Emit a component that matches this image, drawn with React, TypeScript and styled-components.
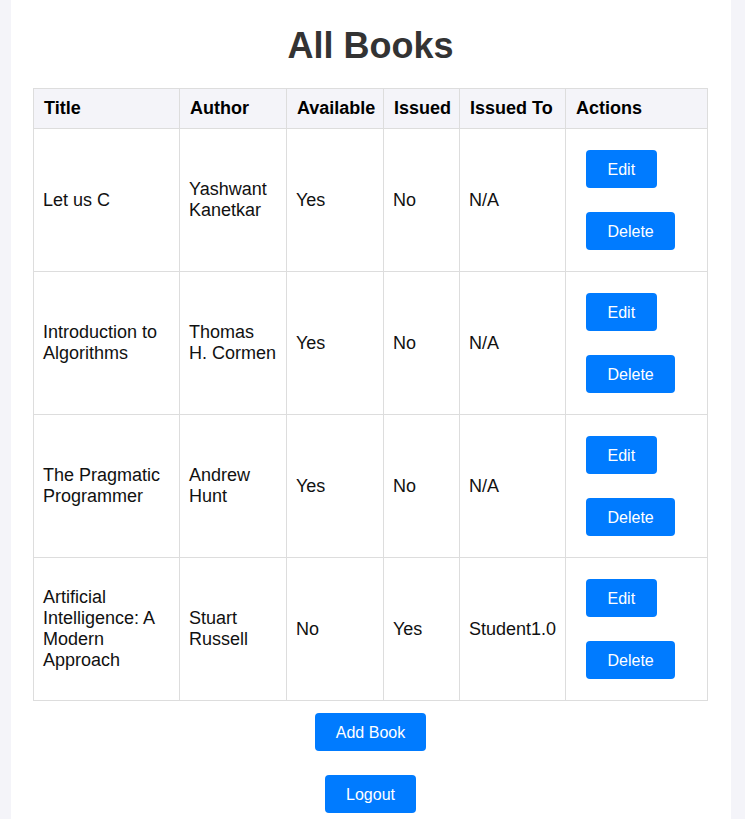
import React from "react";
import styled, { createGlobalStyle } from "styled-components";

const GlobalStyle = createGlobalStyle`
  html, body {
    margin: 0;
    padding: 0;
    background: #f4f4f9;
    font-family: "Liberation Sans", Arial, sans-serif;
  }
`;

const Container = styled.div`
  width: 720px;
  margin-left: 11px;
  box-sizing: border-box;
  background: #ffffff;
  padding: 25px 23px 6px 22px;
  min-height: 819px;
`;

const Title = styled.h1`
  margin: 0 0 22px;
  text-align: center;
  font-size: 36px;
  line-height: 41px;
  font-weight: bold;
  color: #333333;
`;

const Table = styled.table`
  width: 674px;
  border-collapse: collapse;
  table-layout: fixed;
  font-size: 18px;
  color: #111111;
`;

const HeadCell = styled.th`
  border: 1px solid #dddddd;
  background: #f4f4f9;
  padding: 9px 10px;
  text-align: left;
  font-weight: bold;
  line-height: 21px;
  color: #000000;
`;

const Cell = styled.td`
  border: 1px solid #dddddd;
  padding: 10px 9px 10px 9px;
  line-height: 21px;
  vertical-align: middle;
`;

const ActionCell = styled.td`
  border: 1px solid #dddddd;
  padding: 21px 20px 21px 20px;
  vertical-align: middle;
`;

const ActionStack = styled.div`
  display: flex;
  flex-direction: column;
  align-items: flex-start;
  gap: 24px;
`;

const Button = styled.button<{ $wide?: boolean }>`
  display: inline-block;
  background: #007bff;
  color: #ffffff;
  border: none;
  border-radius: 4px;
  padding: 10px ${(p) => (p.$wide ? "21px" : "21.5px")} 8px;
  height: 38px;
  font-family: "Liberation Sans", Arial, sans-serif;
  font-size: 16px;
  line-height: 20px;
  cursor: pointer;
`;

const Footer = styled.div`
  display: flex;
  flex-direction: column;
  align-items: center;
  gap: 24px;
  margin-top: 12px;
`;

const books = [
  { title: "Let us C", author: "Yashwant Kanetkar", available: "Yes", issued: "No", to: "N/A" },
  { title: "Introduction to Algorithms", author: "Thomas H. Cormen", available: "Yes", issued: "No", to: "N/A" },
  { title: "The Pragmatic Programmer", author: "Andrew Hunt", available: "Yes", issued: "No", to: "N/A" },
  { title: "Artificial Intelligence: A Modern Approach", author: "Stuart Russell", available: "No", issued: "Yes", to: "Student1.0" },
];

const widths = [146, 107, 97, 76, 106, 142];

export default function App() {
  return (
    <>
      <GlobalStyle />
      <Container>
        <Title>All Books</Title>
        <Table>
          <colgroup>
            {widths.map((w, i) => (
              <col key={i} style={{ width: w }} />
            ))}
          </colgroup>
          <thead>
            <tr>
              <HeadCell>Title</HeadCell>
              <HeadCell>Author</HeadCell>
              <HeadCell>Available</HeadCell>
              <HeadCell>Issued</HeadCell>
              <HeadCell>Issued To</HeadCell>
              <HeadCell>Actions</HeadCell>
            </tr>
          </thead>
          <tbody>
            {books.map((b) => (
              <tr key={b.title}>
                <Cell>{b.title}</Cell>
                <Cell>{b.author}</Cell>
                <Cell>{b.available}</Cell>
                <Cell>{b.issued}</Cell>
                <Cell>{b.to}</Cell>
                <ActionCell>
                  <ActionStack>
                    <Button>Edit</Button>
                    <Button>Delete</Button>
                  </ActionStack>
                </ActionCell>
              </tr>
            ))}
          </tbody>
        </Table>
        <Footer>
          <Button $wide>Add Book</Button>
          <Button $wide>Logout</Button>
        </Footer>
      </Container>
    </>
  );
}
